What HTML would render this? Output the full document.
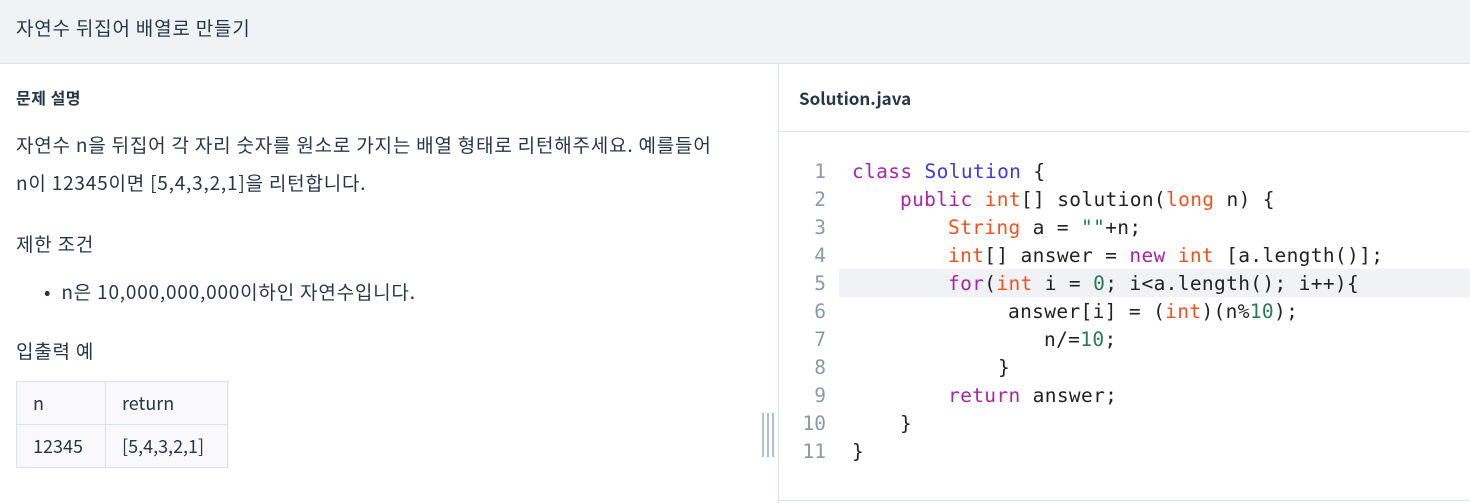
<!DOCTYPE html>
<html><head><meta charset="utf-8"><style>
*{margin:0;padding:0;box-sizing:border-box}
body{width:1470px;height:503px;overflow:hidden;background:#fff;font-family:"Noto Sans CJK KR","Liberation Sans",sans-serif;color:#263747;position:relative}
.top{position:absolute;left:0;top:0;width:1470px;height:64px;background:#f0f3f6;border-bottom:1px solid #d7e2eb}
.top span{position:absolute;left:16px;top:14px;font-size:19px;letter-spacing:0.8px;color:#263747}
.abs{position:absolute;white-space:nowrap}
.t19{font-size:19px;letter-spacing:0.8px}
.div{position:absolute;left:778px;top:64px;width:1px;height:439px;background:#d7e2eb}
.rh{position:absolute;left:779px;top:64px;width:691px;height:68px;border-bottom:1px solid #d7e2eb}
table{position:absolute;left:16px;top:381px;border-collapse:collapse;font-size:18px}
td{border:1px solid #d7e2eb;background:#f9f9fb;height:43px;padding:0 16px;color:#263747}
.code{font-family:"DejaVu Sans Mono","Liberation Mono",monospace;font-size:19.5px;letter-spacing:0.35px;color:#222}
.ln{position:absolute;width:40px;text-align:right;left:786px;color:#8a99a8;font-family:"DejaVu Sans Mono",monospace;font-size:19.5px}
.k{color:#a626a4}.t{color:#f4511e}.c{color:#3b3bdf}.n{color:#2a7a56}
.hl{position:absolute;left:839px;top:269px;width:631px;height:28px;background:#f1f2f6}
.grip{position:absolute;left:762px;top:413px;width:12px;height:44px;border-left:2px solid #b4bfc9;border-right:2px solid #b4bfc9}
.grip:after{content:"";position:absolute;left:3px;top:0;width:2px;height:44px;background:#b4bfc9}
</style></head><body>
<div class="top"><span>자연수 뒤집어 배열로 만들기</span></div>
<div class="abs" style="left:16px;top:85px;font-size:16px;font-weight:bold;letter-spacing:0.5px">문제 설명</div>
<div class="abs t19" style="left:16px;top:126px;line-height:38px">자연수 n을 뒤집어 각 자리 숫자를 원소로 가지는 배열 형태로 리턴해주세요. 예를들어<br>n이 12345이면 [5,4,3,2,1]을 리턴합니다.</div>
<div class="abs t19" style="left:16px;top:230px">제한 조건</div>
<div class="abs t19" style="left:44px;top:278px">•&nbsp;&nbsp;n은 10,000,000,000이하인 자연수입니다.</div>
<div class="abs t19" style="left:16px;top:337px">입출력 예</div>
<table><tr><td style="width:89px">n</td><td style="width:122px">return</td></tr><tr><td>12345</td><td>[5,4,3,2,1]</td></tr></table>
<div class="grip"></div>
<div class="div"></div>
<div class="rh"><span class="abs" style="left:20px;top:21px;font-size:17px;font-weight:bold;color:#263747">Solution.java</span></div>
<div class="hl"></div>
<div class="ln" style="top:160px">1</div>
<div class="ln" style="top:188px">2</div>
<div class="ln" style="top:216px">3</div>
<div class="ln" style="top:244px">4</div>
<div class="ln" style="top:272px">5</div>
<div class="ln" style="top:300px">6</div>
<div class="ln" style="top:328px">7</div>
<div class="ln" style="top:356px">8</div>
<div class="ln" style="top:384px">9</div>
<div class="ln" style="top:412px">10</div>
<div class="ln" style="top:440px">11</div>
<div class="abs code" style="left:852px;top:160px"><span class="k">class</span> <span class="c">Solution</span> {</div>
<div class="abs code" style="left:900px;top:188px"><span class="k">public</span> <span class="t">int</span>[] solution(<span class="t">long</span> n) {</div>
<div class="abs code" style="left:948px;top:216px"><span class="t">String</span> a = <span class="n">""</span>+n;</div>
<div class="abs code" style="left:948px;top:244px"><span class="t">int</span>[] answer = <span class="k">new</span> <span class="t">int</span> [a.length()];</div>
<div class="abs code" style="left:948px;top:272px"><span class="k">for</span>(<span class="t">int</span> i = <span class="n">0</span>; i&lt;a.length(); i++){</div>
<div class="abs code" style="left:1008px;top:300px">answer[i] = (<span class="t">int</span>)(n%<span class="n">10</span>);</div>
<div class="abs code" style="left:1044px;top:328px">n/=<span class="n">10</span>;</div>
<div class="abs code" style="left:998px;top:356px">}</div>
<div class="abs code" style="left:948px;top:384px"><span class="k">return</span> answer;</div>
<div class="abs code" style="left:900px;top:412px">}</div>
<div class="abs code" style="left:852px;top:440px">}</div>
<div style="position:absolute;left:779px;top:500px;width:691px;height:1px;background:#d7e2eb"></div>
</body></html>
